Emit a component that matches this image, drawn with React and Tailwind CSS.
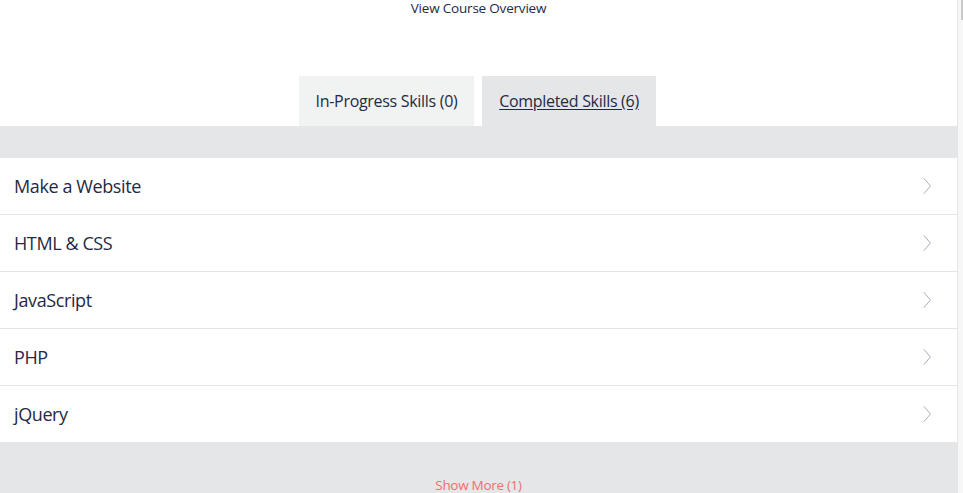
import React from "react";

const skills = ["Make a Website", "HTML & CSS", "JavaScript", "PHP", "jQuery"];

function Chevron() {
  return (
    <svg width="10" height="18" viewBox="0 0 10 18" fill="none" className="shrink-0">
      <path d="M2 1.5 L8.5 9 L2 16.5" stroke="#a9b0bb" strokeWidth="1" strokeLinecap="round" strokeLinejoin="round" />
    </svg>
  );
}

export default function App() {
  return (
    <div
      className="flex w-[963px] h-[493px] overflow-hidden bg-white text-[#1f2a44]"
      style={{ fontFamily: '"Open Sans", "Noto Sans", sans-serif' }}
    >
      <div className="flex-1 flex flex-col min-w-0">
        <div className="h-[76px] shrink-0 flex justify-center">
          <div className="text-[13.5px] leading-[16px] tracking-[-0.2px]">View Course Overview</div>
        </div>
        <div className="flex justify-center gap-2 h-[50px] shrink-0 pr-[2px]">
          <div className="w-[175px] bg-[#f1f2f2] flex items-center justify-center text-[16px] tracking-[-0.3px]">
            In-Progress Skills (0)
          </div>
          <div className="w-[174px] bg-[#e5e6e8] flex items-center justify-center text-[16px] tracking-[-0.3px] underline underline-offset-2">
            Completed Skills (6)
          </div>
        </div>
        <div className="h-[32px] shrink-0 bg-[#e5e6e8]" />
        <div className="flex flex-col shrink-0">
          {skills.map((s, i) => (
            <div
              key={s}
              className={`flex items-center justify-between pl-[14px] pr-[25px] ${i < skills.length - 1 ? "h-[57px] border-b border-[#e3e4e6]" : "h-[56px]"}`}
            >
              <span className="text-[18px] tracking-[-0.4px]">{s}</span>
              <Chevron />
            </div>
          ))}
        </div>
        <div className="flex-1 min-h-0 overflow-hidden bg-[#e5e6e8] flex justify-center">
          <div className="mt-[34px] text-[13.5px] leading-[18px] text-[#f26d6d] tracking-[-0.3px]">Show More (1)</div>
        </div>
      </div>
      <div className="w-[6px] bg-[#f7f7f7] border-l border-[#e6e6e6] flex justify-end">
        <div className="w-[2px] h-[20px] bg-[#c9c9c9]" />
      </div>
    </div>
  );
}
